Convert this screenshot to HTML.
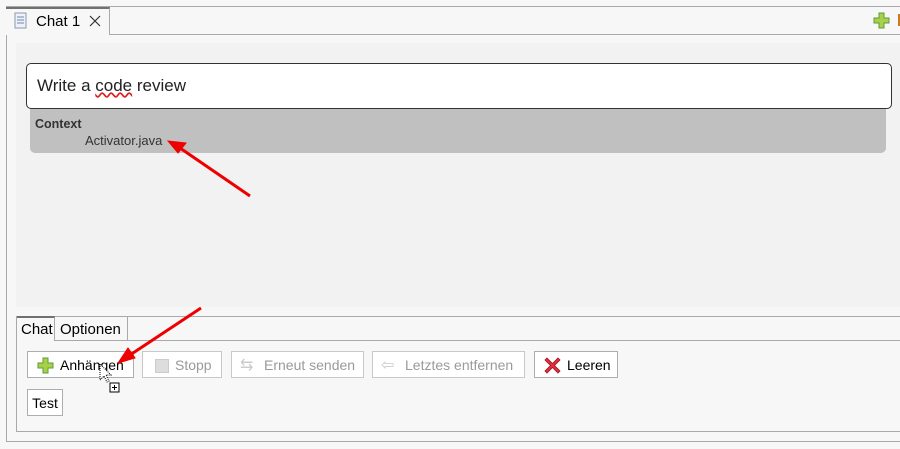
<!DOCTYPE html>
<html><head><style>
body{margin:0;width:900px;height:449px;background:#f7f7f7;font-family:"Liberation Sans",sans-serif;position:relative;overflow:hidden}
.a{position:absolute}
.btn{position:absolute;top:351px;height:27px;border:1px solid #adadad;background:#fff;font-size:14px;line-height:27px;box-sizing:border-box;color:#000;white-space:nowrap}
.dis{color:#9a9a9a;border-color:#c8c8c8}
</style></head><body>
<div class="a" style="left:6px;top:6px;width:894px;height:436px;border-left:1px solid #a9a9a9;border-top:1px solid #a9a9a9;border-bottom:1px solid #a9a9a9;box-sizing:border-box"></div>
<div class="a" style="left:6px;top:34px;width:894px;border-top:1px solid #a9a9a9"></div>
<div class="a" style="left:6px;top:7px;width:104px;height:28px;background:#f7f7f7;border-right:1px solid #a9a9a9;box-sizing:border-box;border-top:2px solid #707070"></div>
<svg class="a" style="left:14px;top:12px" width="14" height="18"><rect x="1" y="1" width="11" height="15" fill="#eef2f8" stroke="#8a98b0"/><g stroke="#6f86b5"><line x1="3" y1="5" x2="10" y2="5"/><line x1="3" y1="8" x2="10" y2="8"/><line x1="3" y1="11" x2="10" y2="11"/></g></svg>
<div class="a" style="left:36px;top:13px;font-size:15px">Chat 1</div>
<svg class="a" style="left:89px;top:15px" width="12" height="12"><path d="M1 1L11 11M11 1L1 11" stroke="#333" stroke-width="1.2"/></svg>
<svg class="a" style="left:873px;top:12px" width="17" height="17"><path d="M6 1h5v5h5v5h-5v5h-5v-5h-5v-5h5z" fill="#a8d14a" stroke="#5f9a3a"/></svg>
<div class="a" style="left:898px;top:14px;width:2px;height:12px;background:#d07820"></div>
<div class="a" style="left:16px;top:43px;width:884px;height:264px;background:#f2f2f2"></div>
<div class="a" style="left:30px;top:108px;width:856px;height:45px;background:#c0c0c0;border-radius:0 0 5px 5px"></div>
<div class="a" style="left:26px;top:63px;width:866px;height:46px;background:#fff;border:1px solid #333;border-radius:5px;box-sizing:border-box"></div>
<div class="a" style="left:37px;top:76px;font-size:17px;color:#222">Write a <span style="text-decoration:underline wavy #e02020">code</span> review</div>
<div class="a" style="left:35px;top:117px;font-size:12.5px;font-weight:bold;color:#333">Context</div>
<div class="a" style="left:85px;top:133px;font-size:13px;color:#333">Activator.java</div>
<div class="a" style="left:16px;top:316px;width:884px;height:116px;border-left:1px solid #a9a9a9;border-top:1px solid #a9a9a9;border-bottom:1px solid #a9a9a9;box-sizing:border-box"></div>
<div class="a" style="left:17px;top:316px;width:38px;height:25px;background:#f7f7f7;border-top:2px solid #707070;border-right:1px solid #a9a9a9;box-sizing:border-box"></div>
<div class="a" style="left:55px;top:316px;width:73px;height:25px;border-right:1px solid #a9a9a9;box-sizing:border-box"></div>
<div class="a" style="left:55px;top:340px;width:845px;border-top:1px solid #a9a9a9"></div>
<div class="a" style="left:21px;top:321px;font-size:15px">Chat</div>
<div class="a" style="left:60px;top:321px;font-size:15px">Optionen</div>
<div class="btn" style="left:27px;width:107px"><svg style="position:absolute;left:9px;top:5px" width="17" height="17"><path d="M6 1h5v5h5v5h-5v5h-5v-5h-5v-5h5z" fill="#a8d14a" stroke="#5f9a3a"/></svg><span style="position:absolute;left:32px">Anhängen</span></div>
<div class="btn dis" style="left:142px;width:80px"><div style="position:absolute;left:12px;top:7px;width:12px;height:12px;background:#ddd;border:1px solid #ccc"></div><span style="position:absolute;left:32px">Stopp</span></div>
<div class="btn dis" style="left:231px;width:133px"><span style="position:absolute;left:8px;color:#ccc;font-size:16px">⇆</span><span style="position:absolute;left:32px">Erneut senden</span></div>
<div class="btn dis" style="left:372px;width:153px"><span style="position:absolute;left:8px;color:#ccc;font-size:16px">⇦</span><span style="position:absolute;left:32px">Letztes entfernen</span></div>
<div class="btn" style="left:534px;width:84px"><svg style="position:absolute;left:9px;top:5px" width="17" height="17"><path d="M3 1L8.5 6.5L14 1L16 3L10.5 8.5L16 14L14 16L8.5 10.5L3 16L1 14L6.5 8.5L1 3z" fill="#e0303a" stroke="#a01020" stroke-width=".8"/></svg><span style="position:absolute;left:32px">Leeren</span></div>
<div class="btn" style="left:27px;top:389px;width:36px;text-align:center">Test</div>
<svg class="a" style="left:98px;top:362px" width="24" height="34"><path d="M2 2v16l4-4 3 6 2-1-3-6h5z" fill="#fff" stroke="#000" stroke-dasharray="1 1"/><rect x="12" y="21" width="9" height="9" fill="#fff" stroke="#000"/><path d="M16.5 23v5M14 25.5h5" stroke="#000"/></svg>
<svg class="a" style="left:0;top:0" width="900" height="449"><g stroke="#e00" stroke-width="3" fill="#e00"><line x1="250" y1="196" x2="180" y2="148"/><polygon points="168,141 186,143 178,153" stroke-width="1"/><line x1="201" y1="308" x2="130" y2="355"/><polygon points="118,363 128,348 135,358" stroke-width="1"/></g></svg>
</body></html>
